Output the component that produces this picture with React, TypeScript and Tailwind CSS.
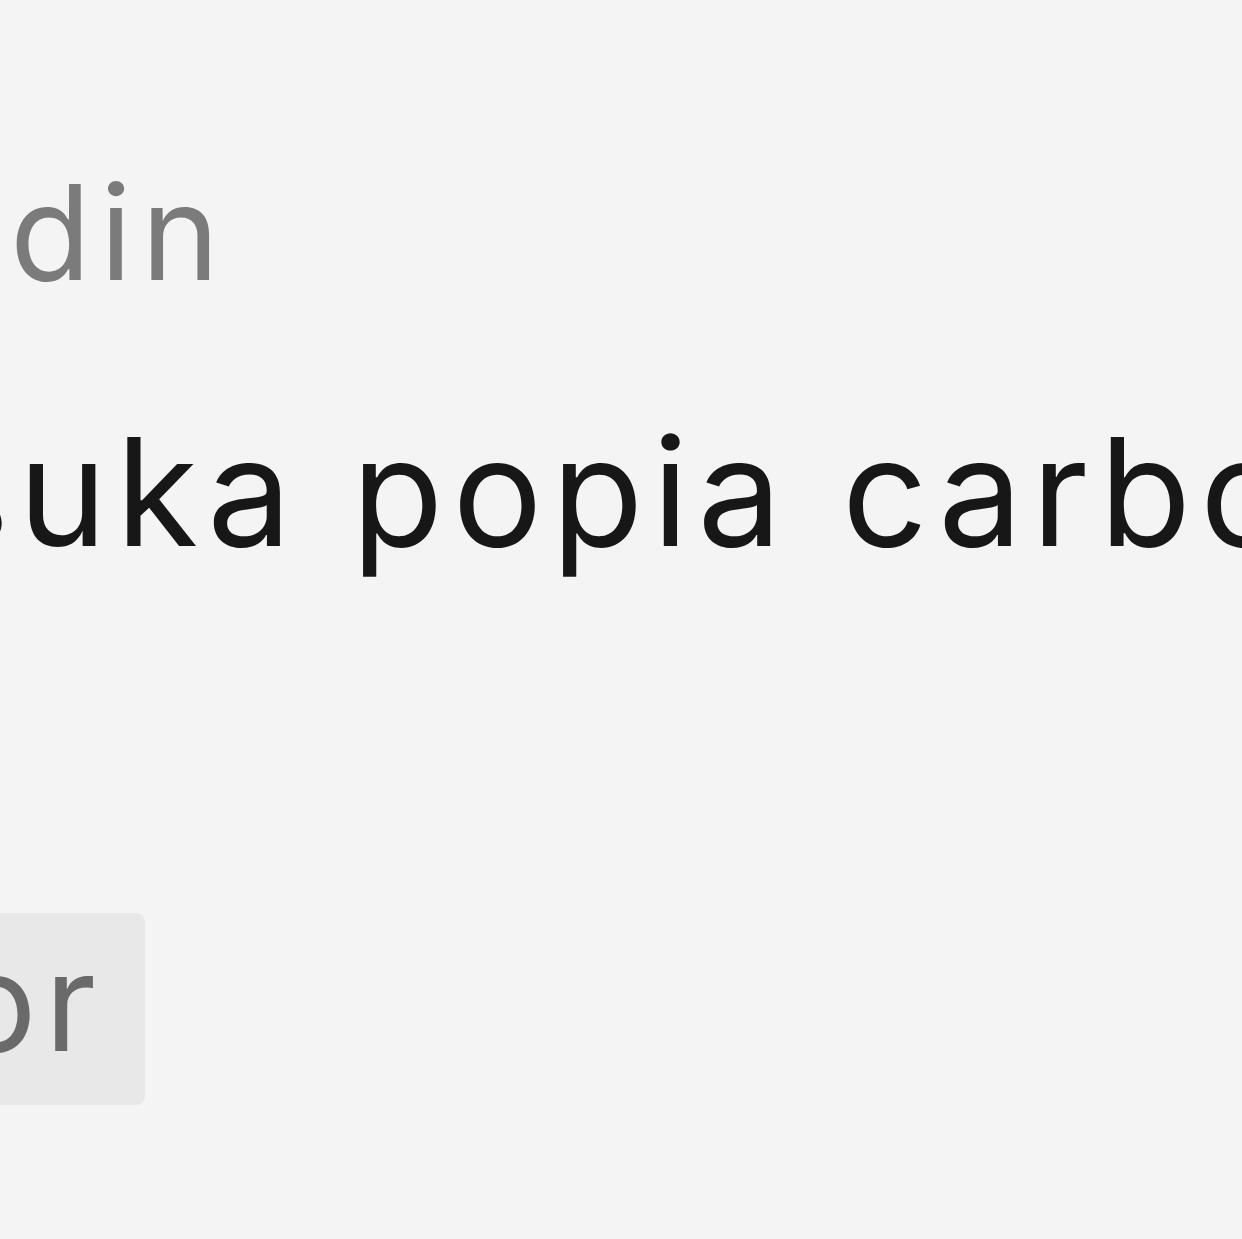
import React from "react";

export default function App() {
  return (
    <div
      className="w-[1242px] h-[1239px] overflow-hidden bg-[#f4f4f4] flex flex-col"
      style={{ fontFamily: 'Inter, "Noto Sans", sans-serif' }}
    >
      <div className="pt-[132px] pl-[10px] text-[132px] leading-[200px] tracking-[0.07em] text-[#7b7b7b] whitespace-nowrap">
        din
      </div>
      <div className="mt-[60px] -ml-[70px] text-[150px] leading-[200px] tracking-[0.06em] text-[#171717] whitespace-nowrap">
        suka popia carbonara
      </div>
      <div className="mt-[321px] flex">
        <div className="-ml-[125px] h-[192px] pl-[80px] pr-[41px] flex items-center bg-[#e8e8e8] rounded-[9px] text-[136px] leading-none tracking-[0.06em] text-[#6a6a6a] whitespace-nowrap">
          <span className="-mt-[14px]">or</span>
        </div>
      </div>
    </div>
  );
}
